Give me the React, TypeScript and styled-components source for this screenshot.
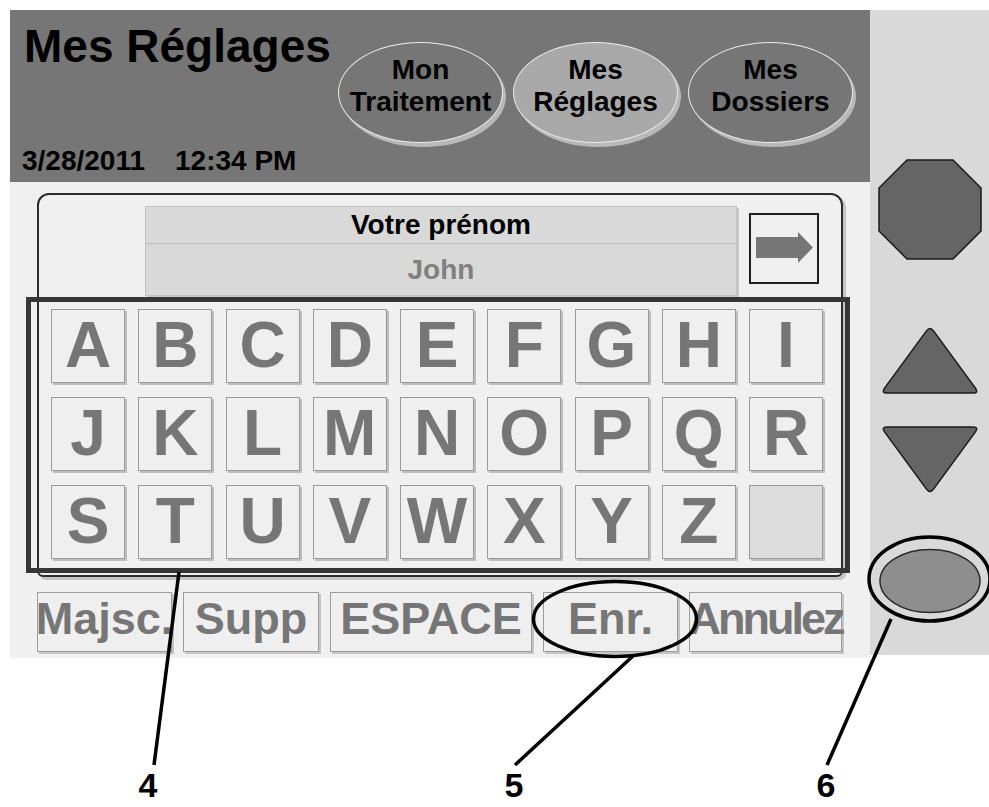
import React from "react";
import styled, { createGlobalStyle } from "styled-components";

const GlobalStyle = createGlobalStyle`
  html, body { margin: 0; padding: 0; background: #ffffff; }
  body { font-family: "Liberation Sans", Arial, sans-serif; }
`;

const Page = styled.div`
  position: relative;
  width: 989px;
  height: 807px;
  overflow: hidden;
  background: #ffffff;
  padding: 10px 0 0 10px;
  box-sizing: border-box;
  font-family: "Liberation Sans", Arial, sans-serif;
  font-weight: 700;
`;

const Screen = styled.div`
  display: grid;
  grid-template-columns: 860px 119px;
  height: 648px;
`;

const Main = styled.div`
  display: flex;
  flex-direction: column;
`;

const Header = styled.header`
  height: 172px;
  flex: none;
  background: #767676;
  display: flex;
  padding-left: 12px;
  box-sizing: border-box;
`;

const TitleCol = styled.div`
  width: 316px;
  display: flex;
  flex-direction: column;
  justify-content: space-between;
  padding: 13px 0 7px;
  box-sizing: border-box;
`;

const Title = styled.h1`
  margin: 0 0 0 2px;
  font-size: 46px;
  line-height: 46px;
  font-weight: 700;
  color: #000;
  white-space: nowrap;
`;

const DateLine = styled.div`
  display: flex;
  gap: 30px;
  font-size: 28px;
  line-height: 28px;
  color: #000;
  white-space: nowrap;
`;

const Tabs = styled.nav`
  display: flex;
  gap: 10px;
  margin-top: 32px;
  align-items: flex-start;
`;

const Tab = styled.div<{ $active?: boolean }>`
  width: 165px;
  height: 101px;
  border-radius: 50%;
  box-sizing: border-box;
  background: ${(p) => (p.$active ? "#a9a9a9" : "#767676")};
  border: 1px solid #ececec;
  box-shadow: 3px 4px 0 #b9b9b9;
  display: flex;
  flex-direction: column;
  align-items: center;
  justify-content: center;
  text-align: center;
  font-size: 28px;
  line-height: 32px;
  color: #000;
  padding-bottom: 14px;
  white-space: nowrap;
`;

const Body = styled.div`
  flex: 1;
  background: #f0f0f0;
  padding: 11px 0 0 27px;
`;

const Panel = styled.div`
  width: 806px;
  height: 384px;
  box-sizing: border-box;
  border: 2px solid #2b2b2b;
  border-radius: 12px 12px 6px 6px;
  box-shadow: 3px 3px 0 #c4c4c4;
  padding-top: 11px;
  display: flex;
  flex-direction: column;
`;

const FieldRow = styled.div`
  display: flex;
  align-items: flex-start;
  gap: 12px;
  padding-left: 106px;
`;

const Field = styled.div`
  width: 592px;
  height: 90px;
  box-sizing: border-box;
  background: #d9d9d9;
  border: 1px solid #c2c2c2;
  box-shadow: 2px 2px 0 #c9c9c9;
  display: grid;
  grid-template-rows: 37px 1fr;
  font-size: 28px;
`;

const FieldLabel = styled.div`
  display: flex;
  align-items: center;
  justify-content: center;
  border-bottom: 1px solid #bdbdbd;
  color: #000;
`;

const FieldValue = styled.div`
  display: flex;
  align-items: center;
  justify-content: center;
  color: #808080;
`;

const NextButton = styled.div`
  width: 70px;
  height: 71px;
  margin-top: 7px;
  box-sizing: border-box;
  border: 2px solid #1e1e1e;
  background: #f0f0f0;
  display: flex;
  align-items: center;
  justify-content: center;
`;

const Keyboard = styled.div`
  margin: 1px -9px 0 -13px;
  height: 276px;
  box-sizing: border-box;
  border: 5px solid #363636;
  padding: 7px 22px 9px 20px;
  display: grid;
  grid-template-columns: repeat(9, 74px);
  grid-auto-rows: 74px;
  row-gap: 14px;
  justify-content: space-between;
`;

const Key = styled.div<{ $blank?: boolean }>`
  box-sizing: border-box;
  border: 1px solid #9a9a9a;
  background: ${(p) => (p.$blank ? "#dcdcdc" : "#efefef")};
  box-shadow: 2px 2px 0 #bdbdbd;
  display: flex;
  align-items: center;
  justify-content: center;
  font-size: 64px;
  line-height: 1;
  color: #767676;
  padding-bottom: 3px;
`;

const ActionRow = styled.div`
  display: flex;
  gap: 11px;
  margin-top: 15px;
`;

const ActionButton = styled.div<{ $w: number; $tight?: boolean }>`
  width: ${(p) => p.$w}px;
  height: 60px;
  box-sizing: border-box;
  border: 1px solid #9c9c9c;
  background: #efefef;
  box-shadow: 2px 2px 0 #c4c4c4;
  display: flex;
  align-items: center;
  justify-content: center;
  font-size: 45px;
  line-height: 1;
  color: #767676;
  white-space: nowrap;
  overflow: visible;
  letter-spacing: ${(p) => (p.$tight ? "-3px" : "0")};
  padding-bottom: 8px;
`;

const Side = styled.aside`
  height: 645px;
  background: #d9d9d9;
  display: flex;
  flex-direction: column;
  align-items: center;
  padding-top: 149px;
  box-sizing: border-box;
`;

const SideIcon = styled.svg<{ $gap: number }>`
  display: block;
  margin-top: ${(p) => p.$gap}px;
  flex: none;
`;

const Overlay = styled.svg`
  position: absolute;
  left: 0;
  top: 0;
  pointer-events: none;
`;

const Callout = styled.span<{ $x: number }>`
  position: absolute;
  top: 768px;
  left: ${(p) => p.$x - 20}px;
  width: 40px;
  text-align: center;
  font-family: "Liberation Sans Narrow", "Liberation Sans", Arial, sans-serif;
  font-weight: 700;
  font-size: 34px;
  line-height: 34px;
  color: #000;
`;

const letters = "ABCDEFGHIJKLMNOPQRSTUVWXYZ".split("");

export default function App() {
  return (
    <>
      <GlobalStyle />
      <Page>
        <Screen>
          <Main>
            <Header>
              <TitleCol>
                <Title>Mes Réglages</Title>
                <DateLine>
                  <span>3/28/2011</span>
                  <span>12:34 PM</span>
                </DateLine>
              </TitleCol>
              <Tabs>
                <Tab>
                  <span>Mon</span>
                  <span>Traitement</span>
                </Tab>
                <Tab $active>
                  <span>Mes</span>
                  <span>Réglages</span>
                </Tab>
                <Tab>
                  <span>Mes</span>
                  <span>Dossiers</span>
                </Tab>
              </Tabs>
            </Header>
            <Body>
              <Panel>
                <FieldRow>
                  <Field>
                    <FieldLabel>Votre prénom</FieldLabel>
                    <FieldValue>John</FieldValue>
                  </Field>
                  <NextButton>
                    <svg width="66" height="67" viewBox="0 0 66 67">
                      <polygon
                        points="5,22 47,22 47,17 62,32.5 47,48 47,43 5,43"
                        fill="#767676"
                      />
                    </svg>
                  </NextButton>
                </FieldRow>
                <Keyboard>
                  {letters.map((l) => (
                    <Key key={l}>{l}</Key>
                  ))}
                  <Key $blank />
                </Keyboard>
              </Panel>
              <ActionRow>
                <ActionButton $w={135}>Majsc.</ActionButton>
                <ActionButton $w={136}>Supp</ActionButton>
                <ActionButton $w={202}>ESPACE</ActionButton>
                <ActionButton $w={135}>Enr.</ActionButton>
                <ActionButton $w={153} $tight>
                  Annulez
                </ActionButton>
              </ActionRow>
            </Body>
          </Main>
          <Side>
            <SideIcon $gap={0} width="104" height="101" viewBox="0 0 104 101">
              <polygon
                points="29,1 75,1 103,29 103,72 75,100 29,100 1,72 1,29"
                fill="#656565"
                stroke="#1a1a1a"
                strokeWidth="1.5"
                strokeLinejoin="round"
              />
            </SideIcon>
            <SideIcon $gap={64} width="104" height="72" viewBox="0 0 104 72">
              <path
                d="M48.46,6.84 Q52,2 55.54,6.84 L97.46,64.16 Q101,69 95,69 L9,69 Q3,69 6.54,64.16 Z"
                fill="#656565"
                stroke="#1a1a1a"
                strokeWidth="1.5"
              />
            </SideIcon>
            <SideIcon $gap={28} width="104" height="72" viewBox="0 0 104 72">
              <path
                d="M48.46,65.16 Q52,70 55.54,65.16 L97.46,7.84 Q101,3 95,3 L9,3 Q3,3 6.54,7.84 Z"
                fill="#656565"
                stroke="#1a1a1a"
                strokeWidth="1.5"
              />
            </SideIcon>
            <SideIcon $gap={52} width="104" height="66" viewBox="0 0 104 66">
              <ellipse
                cx="52"
                cy="33"
                rx="50"
                ry="31.5"
                fill="#8e8e8e"
                stroke="#2a2a2a"
                strokeWidth="1.5"
              />
            </SideIcon>
          </Side>
        </Screen>

        <Overlay width="989" height="807" viewBox="0 0 989 807">
          <g fill="none" stroke="#000" strokeWidth="3.5">
            <ellipse cx="615" cy="619" rx="81.5" ry="37.5" />
            <ellipse cx="929.5" cy="579" rx="60.5" ry="42" />
            <line x1="179" y1="572" x2="154" y2="765" />
            <line x1="633" y1="656" x2="515" y2="765" />
            <line x1="891" y1="619" x2="827" y2="765" />
          </g>
        </Overlay>
        <Callout $x={148}>4</Callout>
        <Callout $x={514}>5</Callout>
        <Callout $x={826}>6</Callout>
      </Page>
    </>
  );
}
